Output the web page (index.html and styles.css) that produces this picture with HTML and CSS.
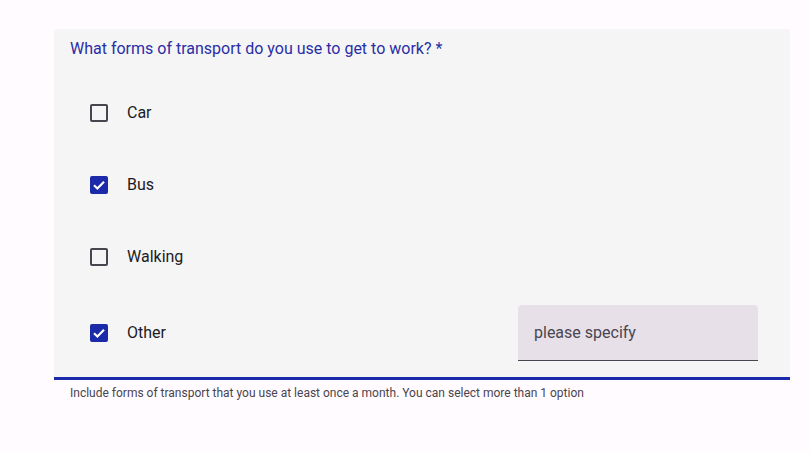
FILE: index.html
```html
<!DOCTYPE html>
<html>
<head>
<meta charset="utf-8">
<link rel="stylesheet" href="styles.css">
</head>
<body>
<div class="field">
  <div class="panel">
    <div class="legend">What forms of transport do you use to get to work? *</div>
    <div class="options">
      <label class="option">
        <span class="box"></span>
        <span class="label">Car</span>
      </label>
      <label class="option">
        <span class="box checked"><svg viewBox="0 0 18 18" width="18" height="18"><path d="M4 9.2 L7.4 12.5 L14 5.8" fill="none" stroke="#fff" stroke-width="2.2"/></svg></span>
        <span class="label">Bus</span>
      </label>
      <label class="option">
        <span class="box"></span>
        <span class="label">Walking</span>
      </label>
      <div class="option option-other">
        <span class="box checked"><svg viewBox="0 0 18 18" width="18" height="18"><path d="M4 9.2 L7.4 12.5 L14 5.8" fill="none" stroke="#fff" stroke-width="2.2"/></svg></span>
        <span class="label">Other</span>
        <div class="input">please specify</div>
      </div>
    </div>
  </div>
  <div class="helper">Include forms of transport that you use at least once a month. You can select more than 1 option</div>
</div>
</body>
</html>
```
FILE: styles.css
```css
html, body {
  margin: 0;
  padding: 0;
  background: #fffbfe;
  font-family: Roboto, "Liberation Sans", sans-serif;
}
.field {
  margin: 29px 0 0 54px;
  width: 736px;
}
.panel {
  background: #f5f5f5;
  border-radius: 4px 4px 0 0;
  border-bottom: 3px solid #1b2aa8;
  padding: 8px 32px 16px 16px;
}
.legend {
  color: #2a2ea6;
  font-size: 16px;
  line-height: 24px;
}
.options {
  margin-top: 28px;
  display: flex;
  flex-direction: column;
  gap: 24px;
}
.option {
  display: flex;
  align-items: center;
  height: 48px;
  padding-left: 20px;
}
.option-other {
  height: 56px;
}
.box {
  width: 18px;
  height: 18px;
  box-sizing: border-box;
  border: 2px solid #49454f;
  border-radius: 2px;
  flex: none;
}
.box.checked {
  border: none;
  background: #1b2aa8;
}
.box svg {
  display: block;
}
.label {
  margin-left: 19px;
  font-size: 16px;
  line-height: 20px;
  padding-bottom: 1px;
  color: #1c1b1f;
}
.input {
  margin-left: auto;
  width: 240px;
  height: 56px;
  box-sizing: border-box;
  background: #e7e0e8;
  border-radius: 4px 4px 0 0;
  border-bottom: 1px solid #49454f;
  padding-left: 16px;
  display: flex;
  align-items: center;
  font-size: 16px;
  color: #49454f;
}
.helper {
  margin-top: 5px;
  padding-left: 16px;
  font-size: 12px;
  line-height: 16px;
  color: #49454f;
}
```
